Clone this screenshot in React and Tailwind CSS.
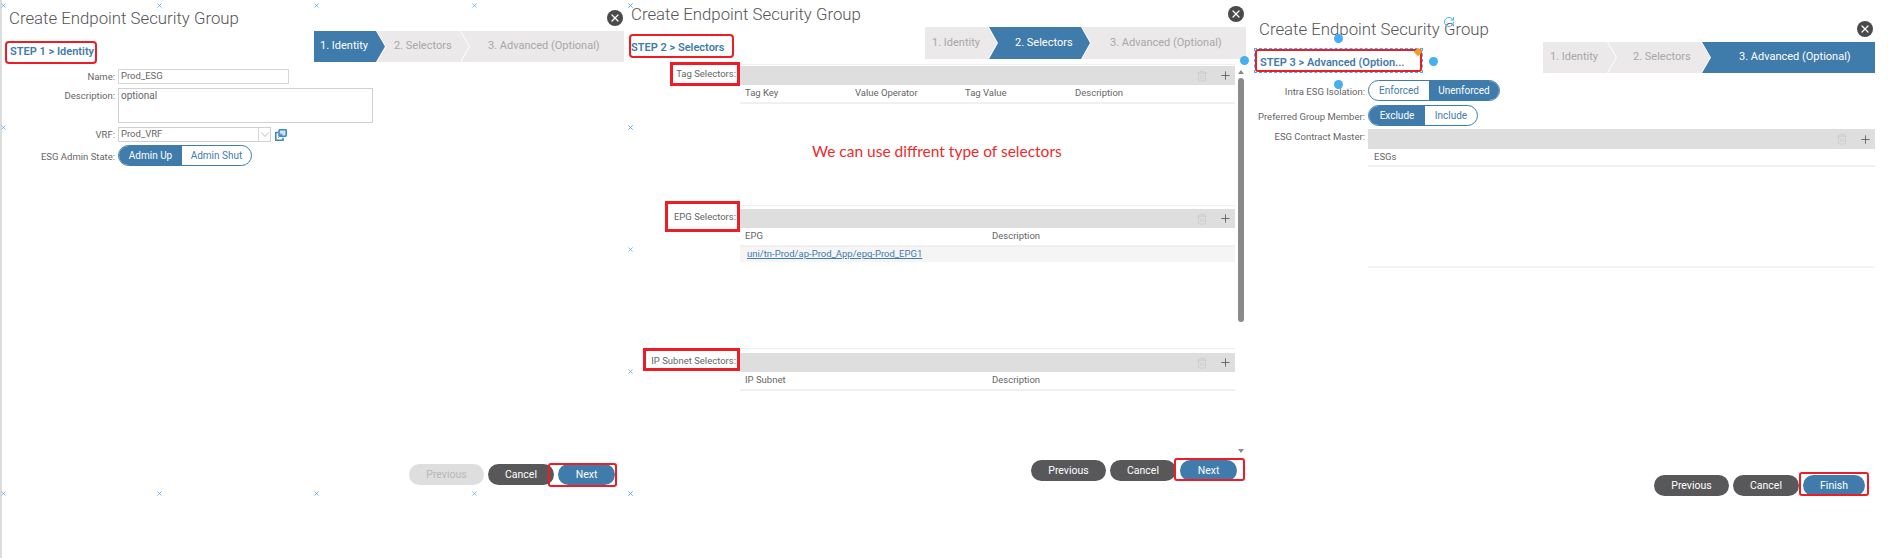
import { Plus, RotateCw, Trash2, X } from "lucide-react";

const Marker = ({ className }) => (
  <X size={7} strokeWidth={2.5} className={`absolute text-[#4aa8e8] ${className}`} />
);

const Dot = ({ className }) => (
  <span className={`absolute h-[9px] w-[9px] rounded-full bg-[#46aef2] ${className}`} />
);

const RedBox = ({ className }) => (
  <span className={`absolute border-[#ee1c25] ${className}`} />
);

const CloseButton = () => (
  <span className="flex h-4 w-4 items-center justify-center rounded-full bg-[#4a4a4a]">
    <X size={12} strokeWidth={2.5} className="text-white" />
  </span>
);

const Title = () => (
  <h2 className="text-[16.8px] leading-[22px] font-light text-[#555]">Create Endpoint Security Group</h2>
);

const StepLabel = ({ children, className }) => (
  <div className={`text-[11px] leading-[14px] font-semibold text-[#3f7bab] ${className}`}>{children}</div>
);

const shapes = {
  1: "[clip-path:polygon(0_0,calc(100%-9px)_0,100%_50%,calc(100%-9px)_100%,0_100%)]",
  2: "-ml-[8px] [clip-path:polygon(0_0,calc(100%-9px)_0,100%_50%,calc(100%-9px)_100%,0_100%,9px_50%)]",
  3: "-ml-[8px] [clip-path:polygon(0_0,100%_0,100%_100%,0_100%,9px_50%)]",
};

const Stepper = ({ active, steps, className }) => (
  <div className={`flex ${className}`}>
    {steps.map((step, i) => (
      <div
        key={step.label}
        className={`flex items-center text-[11px] whitespace-nowrap ${step.className} ${shapes[i + 1]} ${
          i + 1 === active ? "bg-[#3f7bab] text-white" : "bg-[#ebe9e9] text-[#a8a8a8]"
        }`}
      >
        {step.label}
      </div>
    ))}
  </div>
);

const Toggle = ({ left, right, active, leftWidth, width }) => (
  <div className={`flex h-[21px] overflow-hidden rounded-full border border-[#3f7bab] text-[10px] ${width}`}>
    <span
      className={`flex items-center justify-center ${leftWidth} ${
        active === 0 ? "bg-[#3f7bab] text-white" : "text-[#3f7bab]"
      }`}
    >
      {left}
    </span>
    <span
      className={`flex flex-1 items-center justify-center ${
        active === 1 ? "bg-[#3f7bab] text-white" : "text-[#3f7bab]"
      }`}
    >
      {right}
    </span>
  </div>
);

const Footer = ({ last, lastWidth = "w-[57px]", previousDisabled, className }) => (
  <div className={`flex gap-[4px] text-[10.5px] ${className}`}>
    <button
      className={`h-[21px] w-[75px] rounded-full ${
        previousDisabled ? "bg-[#dedede] text-[#b8b8b8]" : "bg-[#58585a] text-white"
      }`}
    >
      Previous
    </button>
    <button className="h-[21px] w-[66px] rounded-full bg-[#58585a] text-white">Cancel</button>
    <button className={`h-[21px] rounded-full bg-[#3f7bab] text-white ${lastWidth}`}>{last}</button>
  </div>
);

const TableBar = ({ height = "h-[19px]" }) => (
  <div className={`flex items-center justify-end gap-[11px] bg-[#dedede] pr-[3px] ${height}`}>
    <Trash2 size={12} strokeWidth={1.5} className="text-[#c8c8c8]" />
    <Plus size={13} strokeWidth={1.5} className="text-[#555]" />
  </div>
);

const SelectorSection = ({ label, columns, height, children }) => (
  <div className={`flex ${height}`}>
    <div className="w-[112px] pr-[4px] text-right text-[9.5px] leading-[15px] whitespace-nowrap text-[#666]">{label}</div>
    <div className="flex-1">
      <TableBar />
      <div className="flex h-[19px] items-center border-b-2 border-[#f0f0f0] pl-[5px] text-[9.5px] text-[#666]">
        {columns.map((col) => (
          <span key={col.name} className={col.width}>
            {col.name}
          </span>
        ))}
      </div>
      {children}
    </div>
  </div>
);

const FormRow = ({ label, labelWidth, className, children }) => (
  <div className={`flex ${className}`}>
    <div className={`pr-[3px] text-right text-[9.5px] leading-[15px] whitespace-nowrap text-[#666] ${labelWidth}`}>{label}</div>
    {children}
  </div>
);

const IdentityPanel = () => (
  <section className="relative h-[558px] w-[628px] shrink-0 border-l-2 border-[#dcdcdc]">
    <div className="flex items-center justify-between pt-[7px] pr-[5px] pl-[7px]">
      <Title />
      <CloseButton />
    </div>
    <div className="flex items-start justify-between pt-[2px] pr-[4px] pl-[8px]">
      <StepLabel className="pt-[14px]">STEP 1 &gt; Identity</StepLabel>
      <Stepper
        active={1}
        className="h-[31px] w-[310px]"
        steps={[
          { label: "1. Identity", className: "w-[71px] pl-[6px]" },
          { label: "2. Selectors", className: "w-[92px] pl-[17px]" },
          { label: "3. Advanced (Optional)", className: "w-[163px] pl-[27px]" },
        ]}
      />
    </div>
    <div className="flex flex-col pt-[7px]">
      <FormRow label="Name:" labelWidth="w-[116px]">
        <div className="flex h-[15px] w-[171px] items-center border border-[#d8d8d8] pl-[2px] text-[9.5px] text-[#666]">
          Prod_ESG
        </div>
      </FormRow>
      <FormRow label="Description:" labelWidth="w-[116px]" className="mt-[4px]">
        <div className="h-[35px] w-[255px] border border-[#d0d0d0] pl-[2px] text-[10px] leading-[14px] text-[#666]">
          optional
        </div>
      </FormRow>
      <FormRow label="VRF:" labelWidth="w-[116px]" className="mt-[4px]">
        <div className="flex h-[15px] w-[153px] items-center border border-[#d0d0d0] text-[9.5px] text-[#666]">
          <span className="flex-1 pl-[2px]">Prod_VRF</span>
          <span className="flex h-full w-[12px] items-center justify-center border-l border-[#d8d8d8]">
            <svg width="8" height="5" viewBox="0 0 8 5" fill="none" stroke="#b0b0b0" strokeWidth="0.8">
              <path d="M0.5 0.5 4 4.5 7.5 0.5" />
            </svg>
          </span>
        </div>
        <svg width="12" height="12" viewBox="0 0 12 12" className="mt-[2px] ml-[4px]" fill="none" stroke="#3f8ac6" strokeWidth="1.6">
          <rect x="4" y="0.8" width="7.2" height="6.4" rx="0.6" fill="#cfe3f3" />
          <path d="M3 3.5H0.8V11.2H8V8.8" />
          <path d="M3.2 8.8 6.6 5.4M4.2 5.2H6.8V7.8" strokeWidth="1" />
        </svg>
      </FormRow>
      <FormRow label="ESG Admin State:" labelWidth="w-[116px] pt-[4px]" className="mt-[3px]">
        <Toggle left="Admin Up" right="Admin Shut" active={0} leftWidth="w-[63px]" width="w-[134px]" />
      </FormRow>
    </div>
    <Footer last="Next" previousDisabled className="absolute top-[464px] left-[407px]" />
    <Marker className="top-[2px] left-[-2px]" />
    <Marker className="top-[2px] left-[154px]" />
    <Marker className="top-[2px] left-[311px]" />
    <Marker className="top-[2px] left-[469px]" />
    <Marker className="top-[2px] left-[625px]" />
    <Marker className="top-[124px] left-[-2px]" />
    <Marker className="top-[124px] left-[625px]" />
    <Marker className="top-[490px] left-[-2px]" />
    <Marker className="top-[490px] left-[154px]" />
    <Marker className="top-[490px] left-[311px]" />
    <Marker className="top-[490px] left-[469px]" />
    <Marker className="top-[490px] left-[625px]" />
    <RedBox className="top-[41px] left-[3px] h-[23px] w-[92px] rounded-[4px] border-2" />
    <RedBox className="top-[463px] left-[546px] h-[24px] w-[69px] rounded-[3px] border-2" />
  </section>
);

const SelectorsPanel = () => (
  <section className="relative h-[558px] w-[618px] shrink-0">
    <div className="flex items-center justify-between pt-[3px] pr-[2px] pl-[3px]">
      <Title />
      <CloseButton />
    </div>
    <div className="flex items-start justify-between pt-[2px]">
      <StepLabel className="pt-[14px] pl-[3px]">STEP 2 &gt; Selectors</StepLabel>
      <Stepper
        active={2}
        className="h-[32px] w-[321px]"
        steps={[
          { label: "1. Identity", className: "w-[72px] pl-[7px]" },
          { label: "2. Selectors", className: "w-[101px] pl-[26px]" },
          { label: "3. Advanced (Optional)", className: "w-[164px] pl-[28px]" },
        ]}
      />
    </div>
    <div className="flex flex-col pt-[7px] pr-[11px]">
      <SelectorSection
        label="Tag Selectors:"
        height="h-[143px]"
        columns={[
          { name: "Tag Key", width: "w-[110px]" },
          { name: "Value Operator", width: "w-[110px]" },
          { name: "Tag Value", width: "w-[110px]" },
          { name: "Description", width: "" },
        ]}
      >
        <p className="pt-[37px] pl-[72px] font-['Lato'] text-[15.5px] leading-[20px] text-[#ee2a2a]">
          We can use diffrent type of selectors
        </p>
      </SelectorSection>
      <SelectorSection
        label="EPG Selectors:"
        height="h-[144px]"
        columns={[
          { name: "EPG", width: "w-[247px]" },
          { name: "Description", width: "" },
        ]}
      >
        <div className="flex h-[15px] items-center bg-[#f5f5f5] pl-[7px] text-[9.5px] text-[#3f7bab] underline">
          uni/tn-Prod/ap-Prod_App/epg-Prod_EPG1
        </div>
      </SelectorSection>
      <SelectorSection
        label="IP Subnet Selectors:"
        height="h-[90px]"
        columns={[
          { name: "IP Subnet", width: "w-[247px]" },
          { name: "Description", width: "" },
        ]}
      />
    </div>
    <div className="absolute top-[64px] right-[11px] h-px w-[494px] bg-[#f0f0f0]" />
    <div className="absolute top-[205px] right-[11px] h-px w-[494px] bg-[#eee]" />
    <div className="absolute top-[348px] right-[11px] h-px w-[494px] bg-[#eee]" />
    <span className="absolute top-[78px] right-[2px] h-[244px] w-[6px] rounded-full bg-[#8a8a8a]" />
    <span className="absolute top-[70px] right-[2px] h-0 w-0 border-x-[3px] border-b-[4px] border-x-transparent border-b-[#8a8a8a]" />
    <span className="absolute top-[449px] right-[2px] h-0 w-0 border-x-[3px] border-t-[4px] border-x-transparent border-t-[#8a8a8a]" />
    <Footer last="Next" className="absolute top-[460px] left-[403px]" />
    <Marker className="top-[2px] left-[-1px]" />
    <Marker className="top-[124px] left-[-1px]" />
    <Marker className="top-[246px] left-[-1px]" />
    <Marker className="top-[368px] left-[-1px]" />
    <Marker className="top-[490px] left-[-1px]" />
    <Dot className="top-[56px] left-[612px]" />
    <RedBox className="top-[34px] left-[1px] h-[24px] w-[105px] rounded-[4px] border-2" />
    <RedBox className="top-[62px] left-[42px] h-[24px] w-[70px] border-[3px]" />
    <RedBox className="top-[201px] left-[37px] h-[31px] w-[75px] border-[3px]" />
    <RedBox className="top-[348px] left-[15px] h-[23px] w-[97px] border-[3px]" />
    <RedBox className="top-[458px] left-[546px] h-[23px] w-[71px] rounded-[3px] border-2" />
  </section>
);

const AdvancedPanel = () => (
  <section className="relative h-[558px] flex-1">
    <div className="flex items-center justify-between pt-[18px] pr-[15px] pl-[13px]">
      <Title />
      <CloseButton />
    </div>
    <div className="flex items-start justify-between pt-[2px] pr-[13px] pl-[14px]">
      <StepLabel className="pt-[14px]">STEP 3 &gt; Advanced (Option...</StepLabel>
      <Stepper
        active={3}
        className="h-[31px] w-[332px]"
        steps={[
          { label: "1. Identity", className: "w-[73px] pl-[7px]" },
          { label: "2. Selectors", className: "w-[102px] pl-[25px]" },
          { label: "3. Advanced (Optional)", className: "w-[173px] pl-[37px]" },
        ]}
      />
    </div>
    <div className="flex flex-col pt-[7px] pr-[13px]">
      <FormRow label="Intra ESG Isolation:" labelWidth="w-[122px] pt-[4px]">
        <Toggle left="Enforced" right="Unenforced" active={1} leftWidth="w-[60px]" width="w-[132px]" />
      </FormRow>
      <FormRow label="Preferred Group Member:" labelWidth="w-[122px] pt-[4px]" className="mt-[4px]">
        <Toggle left="Exclude" right="Include" active={0} leftWidth="w-[56px]" width="w-[110px]" />
      </FormRow>
      <FormRow label="ESG Contract Master:" labelWidth="w-[122px]" className="mt-[3px]">
        <div className="flex-1">
          <TableBar height="h-[20px]" />
          <div className="flex h-[18px] items-center border-b-2 border-[#f0f0f0] pl-[6px] text-[9.5px] text-[#666]">ESGs</div>
          <div className="h-[101px] border-b-2 border-[#f4f4f4]" />
        </div>
      </FormRow>
    </div>
    <Footer last="Finish" lastWidth="w-[62px]" className="absolute top-[475px] left-[408px]" />
    <RotateCw size={12} strokeWidth={2} className="absolute top-[16px] left-[197px] text-[#46aef2]" />
    <Dot className="top-[34px] left-[88px]" />
    <Dot className="top-[57px] left-[183px]" />
    <Dot className="top-[80px] left-[88px]" />
    <RedBox className="top-[49px] left-[9px] h-[23px] w-[167px] rounded-[3px] border-2" />
    <span className="absolute top-[48px] left-[8px] h-[25px] w-[169px] border border-dashed border-[#46aef2]" />
    <span className="absolute top-[49px] left-[169px] h-[6px] w-[6px] rotate-45 bg-[#f0a020]" />
    <RedBox className="top-[472px] left-[553px] h-[24px] w-[70px] rounded-[3px] border-2" />
  </section>
);

export default function App() {
  return (
    <div className="flex h-[558px] w-[1888px] overflow-hidden bg-white font-['Roboto',sans-serif]">
      <IdentityPanel />
      <SelectorsPanel />
      <AdvancedPanel />
    </div>
  );
}
